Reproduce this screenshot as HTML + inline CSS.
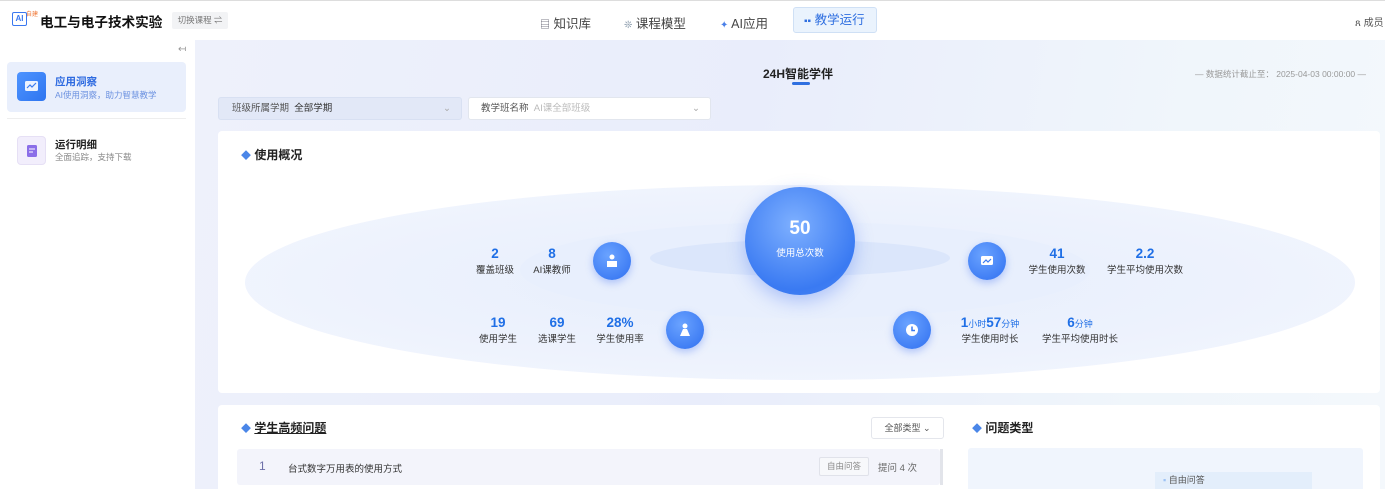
<!DOCTYPE html>
<html style="overflow:hidden;width:1385px;height:489px"><head><meta charset="utf-8"><style>
*{box-sizing:border-box;margin:0;padding:0}
body{width:1385px;height:489px;overflow:hidden;font-family:"Liberation Sans","Noto Sans CJK SC",sans-serif;background:#f0f3fa;position:relative;color:#222}
.a{position:absolute}
.hdr{left:0;top:0;width:1385px;height:40px;background:#fff;border-top:1px solid #ddd}
.side{left:0;top:40px;width:195px;height:449px;background:#fff}
.main{left:195px;top:40px;width:1190px;height:449px;background:linear-gradient(100deg,#eef1fb 0%,#e9edfb 45%,#f0f6fb 80%,#f4f8fc 100%)}
.num{color:#1f6fe6;font-weight:bold;font-size:13.5px;text-align:center}
.lbl{font-size:9.5px;color:#333;text-align:center;white-space:nowrap}
.ic{width:38px;height:38px;border-radius:50%;background:radial-gradient(circle at 40% 35%,#6aa3ff,#2f6ff0);box-shadow:0 3px 8px rgba(60,110,240,.35)}
.ic svg{position:absolute;left:11px;top:11px}
</style></head><body>
<div class="a hdr"></div>
<div class="a" style="left:12px;top:12px;width:15px;height:14px;border:1.5px solid #3a78f0;border-radius:2px;font-size:8px;color:#3a78f0;line-height:11px;text-align:center;font-weight:bold">AI</div>
<div class="a" style="left:26px;top:9px;font-size:6px;color:#f07a3a">自建</div>
<div class="a" style="left:40px;top:11px;font-size:13.6px;font-weight:bold;color:#111;white-space:nowrap">电工与电子技术实验</div>
<div class="a" style="left:172px;top:12px;width:56px;height:17px;background:#f2f3f5;font-size:8.5px;color:#777;line-height:17px;text-align:center;border-radius:2px">切换课程 ⇌</div>
<div class="a" style="left:540px;top:13px;font-size:12.5px;color:#444"><span style="color:#556;font-size:10px">▤</span> 知识库</div>
<div class="a" style="left:624px;top:13px;font-size:12.5px;color:#444"><span style="color:#89a;font-size:10px">❊</span> 课程模型</div>
<div class="a" style="left:720px;top:13px;font-size:12.5px;color:#444"><span style="color:#4a80e8;font-size:10px">✦</span> AI应用</div>
<div class="a" style="left:793px;top:7px;width:84px;height:26px;background:#eaf3fd;border:1px solid #cfe0f5;border-radius:3px;font-size:12.5px;color:#2f6fe0;line-height:24px;padding-left:10px"><span style="font-size:10px">▪▪</span> 教学运行</div>
<div class="a" style="left:1355px;top:14px;font-size:10px;color:#555;white-space:nowrap">ጸ 成员</div>

<div class="a side"></div>
<div class="a" style="left:178px;top:44px;font-size:10px;color:#999">↤</div>
<div class="a" style="left:7px;top:62px;width:179px;height:50px;background:#e9effc;border-radius:4px"></div>
<div class="a" style="left:17px;top:72px;width:29px;height:29px;background:linear-gradient(135deg,#4e94ff,#2e75f0);border-radius:4px"><svg width="29" height="29"><rect x="8" y="9" width="13" height="10" rx="1.5" fill="#fff" opacity=".9"/><path d="M10 16l3-3 2 2 4-4" stroke="#3a7cf0" fill="none" stroke-width="1.2"/></svg></div>
<div class="a" style="left:55px;top:74px;font-size:10.5px;font-weight:bold;color:#2d6ae0">应用洞察</div>
<div class="a" style="left:55px;top:89px;font-size:8.5px;color:#6b91e0">AI使用洞察，助力智慧教学</div>
<div class="a" style="left:7px;top:118px;width:179px;height:1px;background:#eee"></div>
<div class="a" style="left:17px;top:136px;width:29px;height:29px;background:#f2eefc;border:1px solid #e6e0f5;border-radius:4px"><svg width="29" height="29"><rect x="9" y="8" width="10" height="12" rx="1.5" fill="#8b6ee8"/><path d="M11 12h6M11 15h4" stroke="#fff" stroke-width="1"/></svg></div>
<div class="a" style="left:55px;top:137px;font-size:10.5px;font-weight:bold;color:#222">运行明细</div>
<div class="a" style="left:55px;top:151px;font-size:8.5px;color:#888">全面追踪，支持下载</div>

<div class="a main"></div>
<div class="a" style="left:763px;top:65px;font-size:12px;font-weight:bold;color:#222">24H智能学伴</div>
<div class="a" style="left:792px;top:82px;width:18px;height:3px;background:#2f6fe0;border-radius:2px"></div>
<div class="a" style="left:1195px;top:68px;font-size:8.5px;color:#999;white-space:nowrap">— 数据统计截止至： 2025-04-03 00:00:00 —</div>
<div class="a" style="left:218px;top:97px;width:244px;height:23px;background:#e2e8f7;border:1px solid #d8e0f2;border-radius:3px;font-size:9.5px;color:#555;line-height:21px;padding-left:13px">班级所属学期 &nbsp;<span style="color:#333">全部学期</span><span style="position:absolute;right:10px;color:#aaa">⌄</span></div>
<div class="a" style="left:468px;top:97px;width:243px;height:23px;background:#fff;border:1px solid #e2e6ee;border-radius:3px;font-size:9.5px;color:#555;line-height:21px;padding-left:12px">教学班名称 &nbsp;<span style="color:#bbb">AI课全部班级</span><span style="position:absolute;right:10px;color:#aaa">⌄</span></div>

<div class="a" style="left:218px;top:131px;width:1162px;height:262px;background:#fff;border-radius:4px"></div>
<div class="a" style="left:241px;top:146px;font-size:12px;font-weight:bold;color:#222"><span style="color:#4a86e8;font-size:10px">◆</span> 使用概况</div>
<div class="a" style="left:245px;top:185px;width:1110px;height:195px;border-radius:50%;background:radial-gradient(ellipse at center,#e6eefc 0%,#edf2fd 55%,#f4f7fe 100%)"></div>
<div class="a" style="left:520px;top:222px;width:570px;height:96px;border-radius:50%;background:#e8effd"></div>
<div class="a" style="left:650px;top:240px;width:300px;height:36px;border-radius:50%;background:#dbe6fb"></div>
<div class="a" style="left:745px;top:187px;width:110px;height:108px;border-radius:50%;background:radial-gradient(circle at 45% 35%,#7eb0ff,#3a7af2 70%,#4b85f4);box-shadow:0 6px 18px rgba(60,110,240,.35)"></div>
<div class="a" style="left:745px;top:218px;width:110px;text-align:center;color:#fff;font-size:19px;font-weight:bold">50</div>
<div class="a" style="left:745px;top:245px;width:110px;text-align:center;color:#fff;font-size:9.5px">使用总次数</div>

<div class="a ic" style="left:593px;top:242px"><svg width="16" height="16"><circle cx="8" cy="4" r="2.5" fill="#fff"/><rect x="3" y="8" width="10" height="6" fill="#fff"/></svg></div>
<div class="a ic" style="left:666px;top:311px"><svg width="16" height="16"><circle cx="8" cy="4" r="2.5" fill="#fff"/><path d="M3 14l3-7h4l3 7z" fill="#fff"/></svg></div>
<div class="a ic" style="left:968px;top:242px"><svg width="16" height="16"><rect x="2" y="3" width="12" height="9" rx="1.5" fill="#fff"/><path d="M4 10l3-3 2 2 3-3" stroke="#3a7af0" fill="none" stroke-width="1.2"/></svg></div>
<div class="a ic" style="left:893px;top:311px"><svg width="16" height="16"><circle cx="8" cy="8" r="6" fill="#fff"/><path d="M8 4.5v4h3" stroke="#3a7af0" fill="none" stroke-width="1.5"/></svg></div>

<div class="a num" style="left:480px;top:246px;width:30px">2</div><div class="a lbl" style="left:470px;top:262px;width:50px">覆盖班级</div>
<div class="a num" style="left:537px;top:246px;width:30px">8</div><div class="a lbl" style="left:522px;top:262px;width:60px">AI课教师</div>
<div class="a num" style="left:483px;top:315px;width:30px">19</div><div class="a lbl" style="left:473px;top:331px;width:50px">使用学生</div>
<div class="a num" style="left:542px;top:315px;width:30px">69</div><div class="a lbl" style="left:532px;top:331px;width:50px">选课学生</div>
<div class="a num" style="left:600px;top:315px;width:40px">28%</div><div class="a lbl" style="left:590px;top:331px;width:60px">学生使用率</div>
<div class="a num" style="left:1042px;top:246px;width:30px">41</div><div class="a lbl" style="left:1027px;top:262px;width:60px">学生使用次数</div>
<div class="a num" style="left:1125px;top:246px;width:40px">2.2</div><div class="a lbl" style="left:1100px;top:262px;width:90px">学生平均使用次数</div>
<div class="a num" style="left:950px;top:315px;width:80px;color:#1f6fe6">1<span style="font-size:9px;font-weight:normal">小时</span>57<span style="font-size:9px;font-weight:normal">分钟</span></div><div class="a lbl" style="left:955px;top:331px;width:70px">学生使用时长</div>
<div class="a num" style="left:1050px;top:315px;width:60px">6<span style="font-size:9px;font-weight:normal">分钟</span></div><div class="a lbl" style="left:1035px;top:331px;width:90px">学生平均使用时长</div>

<div class="a" style="left:218px;top:405px;width:1162px;height:84px;background:#fff;border-radius:4px 4px 0 0"></div>
<div class="a" style="left:241px;top:419px;font-size:12px;font-weight:bold;color:#222"><span style="color:#4a86e8;font-size:10px">◆</span> <span style="text-decoration:underline">学生高频问题</span></div>
<div class="a" style="left:871px;top:417px;width:73px;height:22px;border:1px solid #e4e6ec;border-radius:3px;font-size:9px;color:#555;line-height:20px;text-align:center">全部类型 ⌄</div>
<div class="a" style="left:972px;top:419px;font-size:12px;font-weight:bold;color:#222"><span style="color:#4a86e8;font-size:10px">◆</span> 问题类型</div>
<div class="a" style="left:237px;top:449px;width:703px;height:36px;background:#f3f4fb;border-radius:3px"></div>
<div class="a" style="left:940px;top:449px;width:3px;height:36px;background:#e2e4ea"></div>
<div class="a" style="left:259px;top:459px;font-size:12px;color:#6c6fa8">1</div>
<div class="a" style="left:288px;top:461px;font-size:9.5px;color:#333">台式数字万用表的使用方式</div>
<div class="a" style="left:819px;top:457px;width:50px;height:19px;border:1px solid #e0e2ea;background:#f7f8fb;border-radius:2px;font-size:8.5px;color:#888;line-height:17px;text-align:center">自由问答</div>
<div class="a" style="left:878px;top:460px;font-size:9.5px;color:#666">提问 4 次</div>
<div class="a" style="left:968px;top:448px;width:395px;height:41px;background:#f0f5fd;border-radius:3px 3px 0 0"></div>
<div class="a" style="left:1155px;top:472px;width:157px;height:17px;background:#e3eefb;font-size:9px;color:#555;line-height:17px;padding-left:8px"><span style="color:#9cc2f5">▪</span> 自由问答</div>
</body></html>
